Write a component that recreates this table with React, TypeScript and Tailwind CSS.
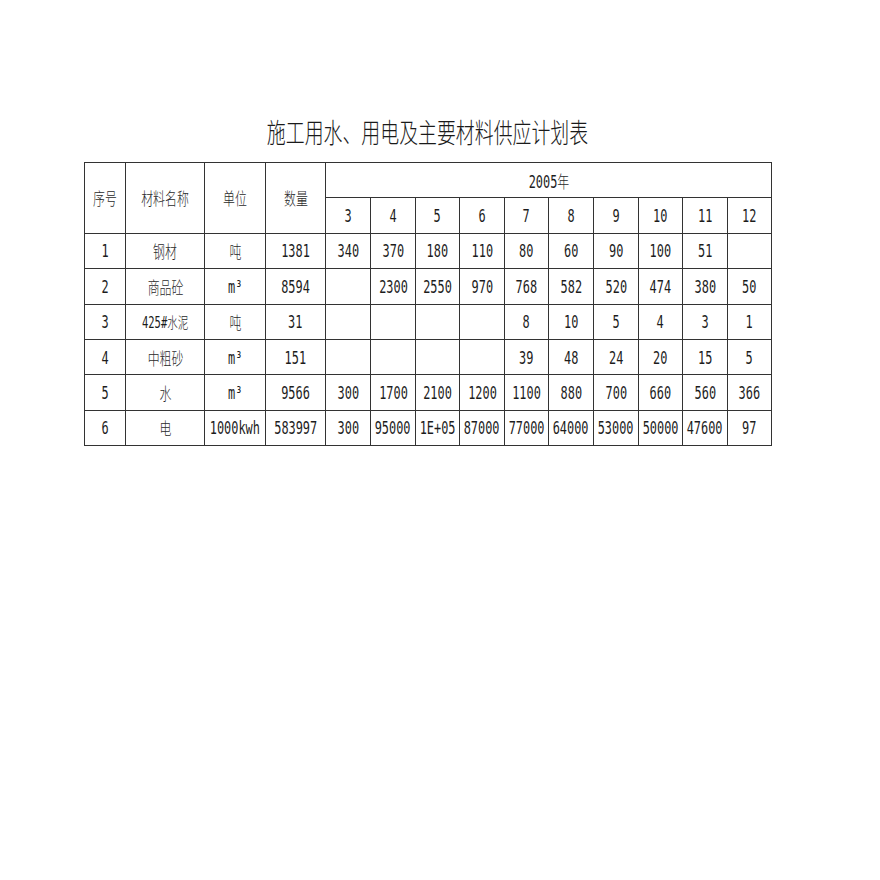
const months = ['3', '4', '5', '6', '7', '8', '9', '10', '11', '12']

const rows = [
  { no: '1', name: '钢材', unit: '吨', qty: '1381', values: ['340', '370', '180', '110', '80', '60', '90', '100', '51', ''] },
  { no: '2', name: '商品砼', unit: 'm³', qty: '8594', values: ['', '2300', '2550', '970', '768', '582', '520', '474', '380', '50'] },
  { no: '3', name: '425#水泥', unit: '吨', qty: '31', values: ['', '', '', '', '8', '10', '5', '4', '3', '1'] },
  { no: '4', name: '中粗砂', unit: 'm³', qty: '151', values: ['', '', '', '', '39', '48', '24', '20', '15', '5'] },
  { no: '5', name: '水', unit: 'm³', qty: '9566', values: ['300', '1700', '2100', '1200', '1100', '880', '700', '660', '560', '366'] },
  { no: '6', name: '电', unit: '1000kwh', qty: '583997', values: ['300', '95000', '1E+05', '87000', '77000', '64000', '53000', '50000', '47600', '97'] },
]

const colWidths = [41, 79, 61, 60, 45, 45, 44, 45, 44, 45, 45, 44, 45, 44]

function Cell({
  children,
  className = '',
  rowSpan,
  colSpan,
}: {
  children?: React.ReactNode
  className?: string
  rowSpan?: number
  colSpan?: number
}) {
  return (
    <td
      rowSpan={rowSpan}
      colSpan={colSpan}
      className={`border border-[#333] p-0 align-middle h-[35.4px] ${className}`}
    >
      <div className="flex justify-center pt-[2px]">
        <span className="shrink-0 scale-x-[0.7] whitespace-nowrap leading-none">{children}</span>
      </div>
    </td>
  )
}

// 中文用细一点的灰黑色，接近原表的宋体
const Cn = ({ children }: { children: React.ReactNode }) => (
  <span className="font-['Noto_Sans_CJK_SC',sans-serif] font-light text-[#2a2a2a]">{children}</span>
)

export default function App() {
  return (
    <div className="min-h-[880px] w-[880px] bg-white pt-[117px] pl-[84px] text-[#1c1c1c] font-['DejaVu_Sans_Mono','Noto_Sans_CJK_SC',monospace] text-[17px]">
      {/* 标题 */}
      <div className="w-[687px] text-center h-[30px] leading-[30px]">
        <span className="inline-block scale-x-[0.7] whitespace-nowrap font-['Noto_Sans_CJK_SC',sans-serif] font-light text-[27px] text-[#1a1a1a]">
          施工用水、用电及主要材料供应计划表
        </span>
      </div>

      <table className="mt-[15px] border-collapse table-fixed w-[687px]">
        <colgroup>
          {colWidths.map((w, i) => (
            <col key={i} style={{ width: w }} />
          ))}
        </colgroup>
        <tbody>
          {/* 表头 */}
          <tr>
            <Cell rowSpan={2}><Cn>序号</Cn></Cell>
            <Cell rowSpan={2}><Cn>材料名称</Cn></Cell>
            <Cell rowSpan={2}><Cn>单位</Cn></Cell>
            <Cell rowSpan={2}><Cn>数量</Cn></Cell>
            <Cell colSpan={10}>2005<Cn>年</Cn></Cell>
          </tr>
          <tr>
            {months.map((m) => (
              <Cell key={m}>{m}</Cell>
            ))}
          </tr>

          {/* 数据行 */}
          {rows.map((r) => (
            <tr key={r.no}>
              <Cell>{r.no}</Cell>
              <Cell>
                {r.name === '425#水泥' ? (
                  <span className="text-[15px]">425#<Cn>水泥</Cn></span>
                ) : (
                  <Cn>{r.name}</Cn>
                )}
              </Cell>
              <Cell>{r.unit === '吨' ? <Cn>吨</Cn> : r.unit}</Cell>
              <Cell>{r.qty}</Cell>
              {r.values.map((v, i) => (
                <Cell key={i}>{v}</Cell>
              ))}
            </tr>
          ))}
        </tbody>
      </table>
    </div>
  )
}
